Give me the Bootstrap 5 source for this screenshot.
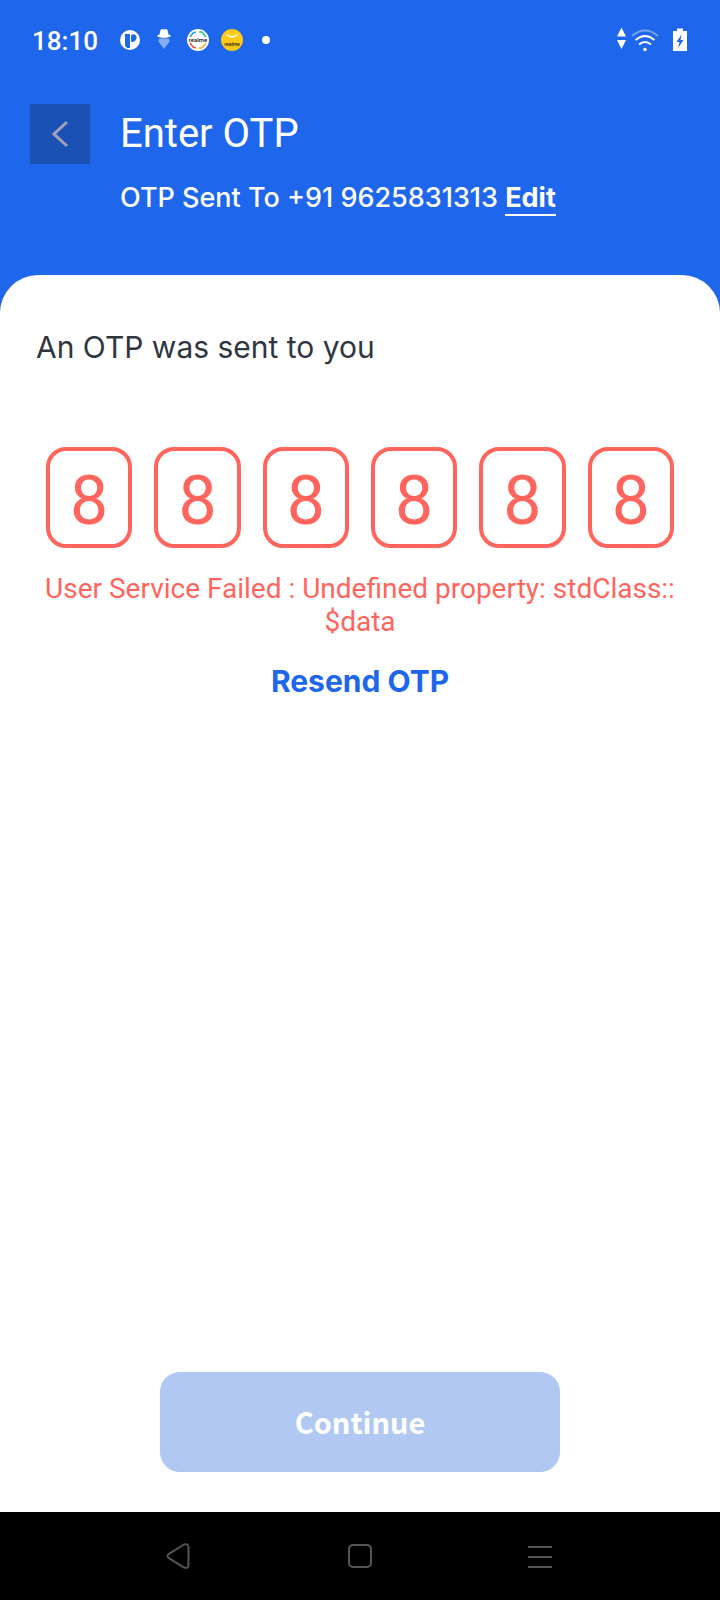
<!DOCTYPE html>
<html lang="en">
<head>
<meta charset="utf-8">
<meta name="viewport" content="width=device-width, initial-scale=1">
<title>Enter OTP</title>
<link href="https://cdn.jsdelivr.net/npm/bootstrap@5.3.0/dist/css/bootstrap.min.css" rel="stylesheet">
<style>
:root { --brand: #1e66ec; --danger: #ff655c; }
body { background: var(--brand); font-family: Roboto, "Liberation Sans", sans-serif; }
svg { display: block; flex: none; }
.inter { font-family: Inter, "Liberation Sans", sans-serif; }
.status-bar { height: 80px; padding: 0 32px; }
.clock { font-size: 26px; line-height: 32px; font-weight: 500; padding-top: 2px; }
.otp-header { padding: 24px 30px 61px; gap: 30px; }
.back-btn { width: 60px; height: 60px; background: #1b51b5; color: #a5a2b8; }
.otp-header h1 { font-size: 40px; line-height: 60px; font-weight: 400; }
.sent-to { font-size: 27px; line-height: 32px; font-weight: 500; margin-top: 18px; }
.sent-to a { border-bottom: 2px solid #fff; }
.sheet { border-radius: 38px 38px 0 0; padding: 55px 36px 40px; }
.lead-in { font-size: 30px; line-height: 34px; color: #2f3640; margin-bottom: 83px; }
.otp-row { gap: 22px; padding: 0 10px; }
.otp-box { min-width: 0; flex: 1 1 0; height: 101px; padding: 6px 0 0; border: 4px solid var(--danger); border-radius: 20px; color: var(--danger); background: #fff; font-size: 68px; line-height: 80px; }
.otp-error { color: var(--danger); font-size: 28px; line-height: 33px; margin-top: 24px; }
.resend { color: var(--brand); font-size: 30px; line-height: 36px; font-weight: 700; margin-top: 25px; }
.continue-btn, .continue-btn:disabled { max-width: 400px; height: 100px; border: 0; border-radius: 20px; background: #b1c8f2; color: #fff; opacity: 1; font-family: "Noto Sans CJK SC", sans-serif; font-size: 29px; font-weight: 700; }
.system-nav { height: 88px; padding: 0 12.5%; background: #000; color: #555; }
.system-nav button { color: inherit; }
</style>
</head>
<body>
<div class="d-flex flex-column min-vh-100">
  <div class="status-bar d-flex align-items-center justify-content-between text-white">
    <div class="d-flex align-items-center">
      <span class="clock">18:10</span>
      <svg class="ms-3" width="160" height="24" viewBox="114 28 160 24" aria-hidden="true">
        <circle cx="130" cy="40" r="10" fill="#fff"/>
        <path d="M125 34h5v14h-2.500q-2.500-1-2.500-3z" fill="#1e66ec"/>
        <path d="M131 35.500q2.500-2.500 5 0 1.500 3-1 5.500-2 1.500-4 .5z" fill="#1e66ec"/>
        <path d="M159.500 34.500l1-4.500q1.500-1.500 3.500-.5 2-1 3.500.5l1 4.500q2 .3 2.500 1.500-2 1.800-7 1.800t-7-1.800q.5-1.200 2.500-1.500z" fill="#fff"/>
        <path d="M159 38.500l-.5 3 5.500 7.500 5.500-7.500-.5-3z" fill="#86adf6"/>
        <circle cx="198" cy="40" r="11" fill="#fff"/>
        <g fill="none" stroke-width="1.500">
          <path d="M190 37l3-4 3-1" stroke="#2aa7e8"/><path d="M199 32h3l4 5" stroke="#25c98f"/>
          <path d="M190 43l3 4 3 1" stroke="#ef4b3c"/><path d="M199 48h3l4-5" stroke="#f5b21b"/>
        </g>
        <text x="198" y="42" text-anchor="middle" font-size="6" font-weight="500" fill="#111">realme</text>
        <circle cx="232" cy="40" r="11" fill="#ffc915"/>
        <path d="M226.500 34.500q5.500 5 11 0" fill="none" stroke="#fff" stroke-width="1.200"/>
        <text x="232" y="46" text-anchor="middle" font-size="5" font-weight="500" fill="#222">realme</text>
        <circle cx="266" cy="40" r="4" fill="#fff"/>
      </svg>
    </div>
    <svg width="72" height="24" viewBox="616 28 72 24" aria-hidden="true">
      <path d="M617 36.500l4.500-9 4.500 9zM617 40h9l-4.500 9z" fill="#fff"/>
      <g fill="none" stroke="#fff" stroke-width="2">
        <path d="M632 36q13-11 26 0" opacity=".4"/><path d="M635.500 40q9.500-8 19 0M639 44.500q6-5 12 0"/>
      </g>
      <circle cx="645" cy="49.500" r="1.800" fill="#fff"/>
      <path d="M673 31h4v-2.500h6V31h4v20h-14z" fill="#fff"/>
      <path d="M681.500 34.500l-5 7.500h3l-1.500 6 5.500-8h-3z" fill="#1e66ec"/>
    </svg>
  </div>

  <header class="otp-header d-flex align-items-start text-white">
    <button type="button" class="back-btn btn rounded-0 border-0 p-0 d-flex align-items-center justify-content-center" aria-label="Back">
      <svg width="20" height="28" viewBox="0 0 20 28" fill="none" stroke="currentColor" stroke-width="3"><path d="M17 2L4 14l13 12"/></svg>
    </button>
    <div>
      <h1 class="m-0">Enter OTP</h1>
      <p class="sent-to inter mb-0">OTP Sent To +91 9625831313 <a href="#" class="text-white text-decoration-none fw-bold">Edit</a></p>
    </div>
  </header>

  <main class="sheet bg-white flex-grow-1 d-flex flex-column">
    <p class="lead-in inter">An OTP was sent to you</p>
    <form class="d-flex flex-column flex-grow-1 text-center">
      <div class="otp-row d-flex">
        <input class="otp-box text-center" type="text" inputmode="numeric" maxlength="1" value="8" aria-label="Digit 1">
        <input class="otp-box text-center" type="text" inputmode="numeric" maxlength="1" value="8" aria-label="Digit 2">
        <input class="otp-box text-center" type="text" inputmode="numeric" maxlength="1" value="8" aria-label="Digit 3">
        <input class="otp-box text-center" type="text" inputmode="numeric" maxlength="1" value="8" aria-label="Digit 4">
        <input class="otp-box text-center" type="text" inputmode="numeric" maxlength="1" value="8" aria-label="Digit 5">
        <input class="otp-box text-center" type="text" inputmode="numeric" maxlength="1" value="8" aria-label="Digit 6">
      </div>
      <p class="otp-error mb-0" role="alert">User Service Failed : Undefined property: stdClass::<br>$data</p>
      <a href="#" class="resend inter text-decoration-none align-self-center">Resend OTP</a>
      <button type="submit" class="continue-btn btn w-100 mt-auto align-self-center" disabled>Continue</button>
    </form>
  </main>

  <nav class="system-nav d-flex align-items-center" aria-label="System">
    <button type="button" class="btn border-0 p-0 flex-fill d-flex justify-content-center" aria-label="Back">
      <svg width="28" height="28" viewBox="0 0 28 28" fill="none" stroke="currentColor" stroke-width="2"><path d="M18 2.500L3 11.800q-3 2.200 0 4.400l15 9.300q4.500 1.500 4.500-3v-17q0-4.500-4.500-3z"/></svg>
    </button>
    <button type="button" class="btn border-0 p-0 flex-fill d-flex justify-content-center" aria-label="Home">
      <svg width="28" height="28" viewBox="0 0 28 28" fill="none" stroke="currentColor" stroke-width="2"><rect x="3" y="3" width="22" height="22" rx="4"/></svg>
    </button>
    <button type="button" class="btn border-0 p-0 flex-fill d-flex justify-content-center" aria-label="Recent apps">
      <svg width="28" height="28" viewBox="0 0 28 28" fill="none" stroke="currentColor" stroke-width="2"><path d="M2 5h24M2 15h24M2 25h24"/></svg>
    </button>
  </nav>
</div>
<script src="https://cdn.jsdelivr.net/npm/bootstrap@5.3.0/dist/js/bootstrap.bundle.min.js"></script>
</body>
</html>
